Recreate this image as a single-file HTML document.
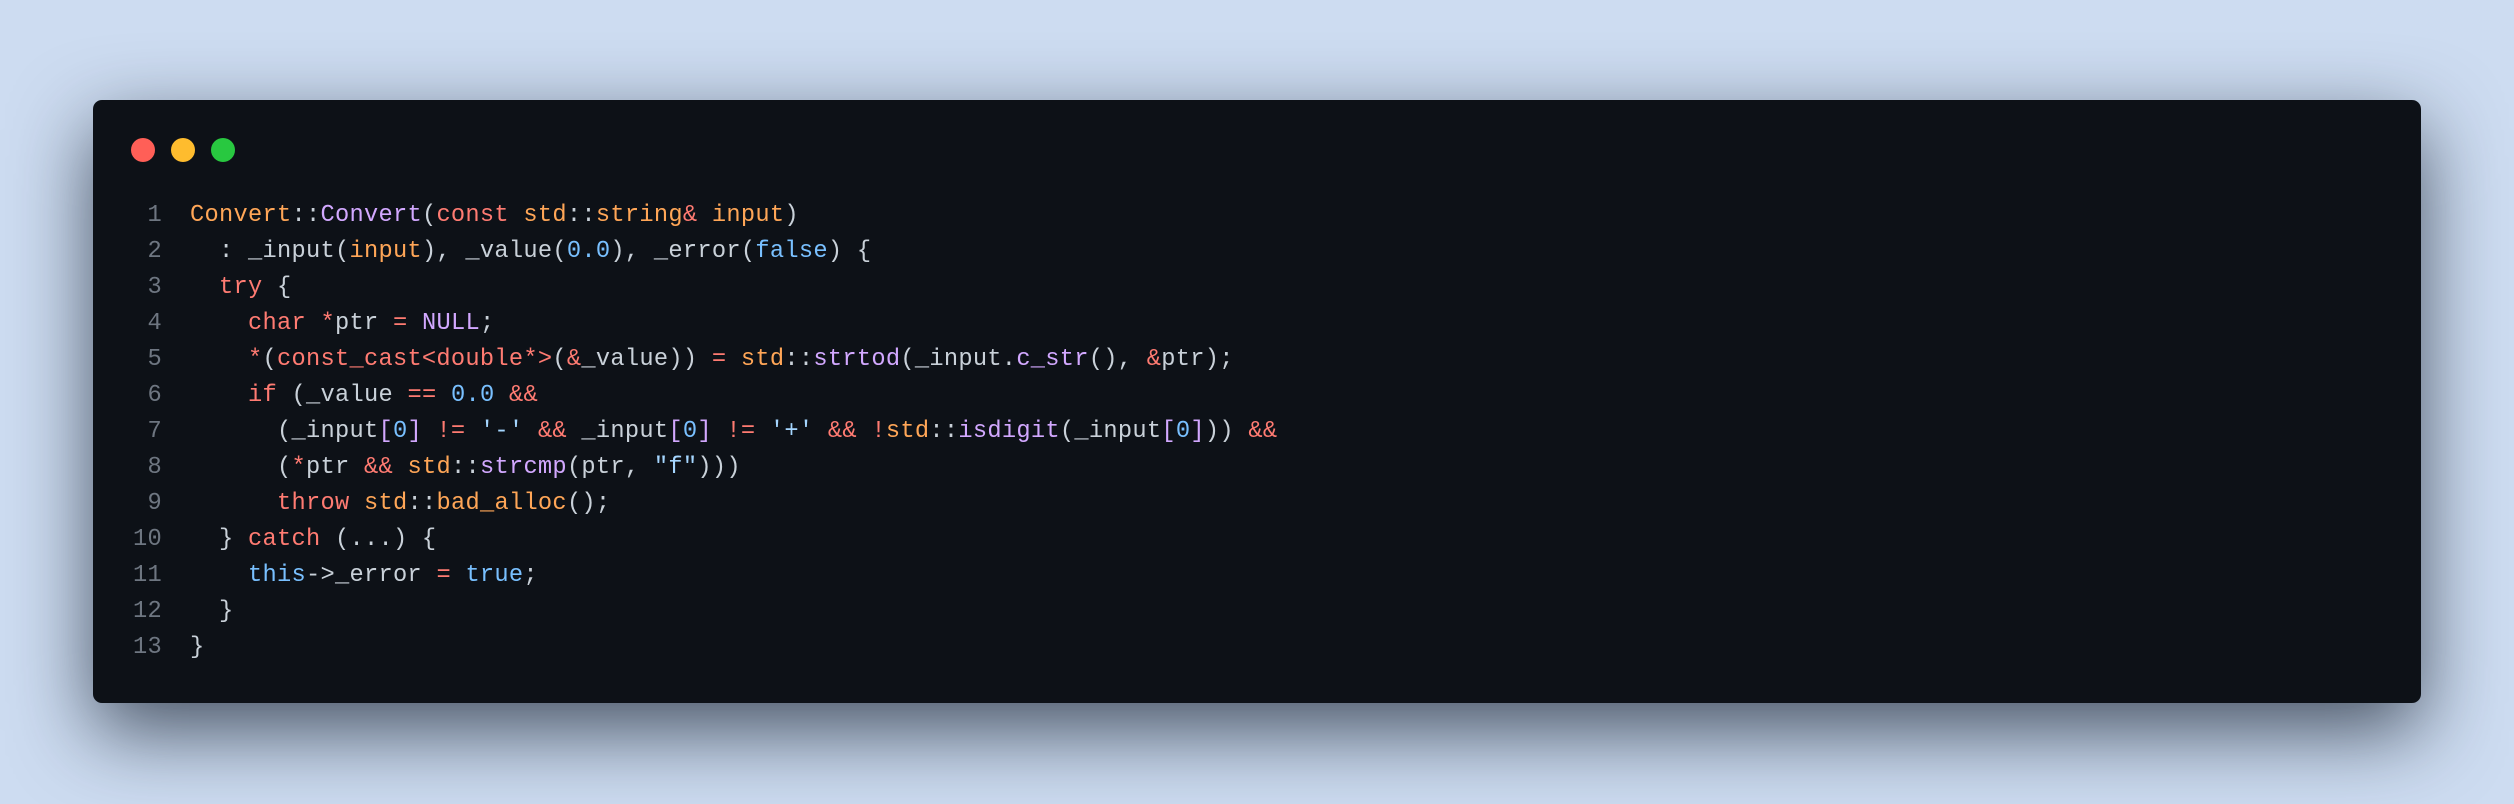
<!DOCTYPE html>
<html><head><meta charset="utf-8"><style>
html,body{margin:0;padding:0;}
body{width:2514px;height:804px;background:#cddcf1;position:relative;overflow:hidden;font-family:"Liberation Mono",monospace;}
.win{position:absolute;left:93px;top:100px;width:2328px;height:603px;background:#0d1117;border-radius:9px;box-shadow:0 28px 80px rgba(15,25,40,0.7);}
.dot{position:absolute;top:138px;width:24px;height:24px;border-radius:50%;}
.code{position:absolute;left:0;top:198px;font-size:23.7px;letter-spacing:0.28px;line-height:36px;color:#c9d1d9;white-space:pre;}
.ln{display:inline-block;width:162px;text-align:right;color:#6e7681;margin-right:28px;}
.k{color:#ff7b72}.o{color:#ffa657}.p{color:#d2a8ff}.b{color:#79c0ff}.s{color:#a5d6ff}
</style></head><body>
<div class="win"></div>
<div class="dot" style="left:131px;background:#ff5f57"></div>
<div class="dot" style="left:171px;background:#febc2e"></div>
<div class="dot" style="left:211px;background:#28c840"></div>
<div class="code"><span class="ln">1</span><span class="o">Convert</span>::<span class="p">Convert</span>(<span class="k">const</span> <span class="o">std</span>::<span class="o">string</span><span class="k">&amp;</span> <span class="o">input</span>)
<span class="ln">2</span>  : _input(<span class="o">input</span>), _value(<span class="b">0.0</span>), _error(<span class="b">false</span>) {
<span class="ln">3</span>  <span class="k">try</span> {
<span class="ln">4</span>    <span class="k">char</span> <span class="k">*</span>ptr <span class="k">=</span> <span class="p">NULL</span>;
<span class="ln">5</span>    <span class="k">*</span>(<span class="k">const_cast&lt;double*&gt;</span>(<span class="k">&amp;</span>_value)) <span class="k">=</span> <span class="o">std</span>::<span class="p">strtod</span>(_input.<span class="p">c_str</span>(), <span class="k">&amp;</span>ptr);
<span class="ln">6</span>    <span class="k">if</span> (_value <span class="k">==</span> <span class="b">0.0</span> <span class="k">&amp;&amp;</span>
<span class="ln">7</span>      (_input<span class="p">[</span><span class="b">0</span><span class="p">]</span> <span class="k">!=</span> <span class="s">'-'</span> <span class="k">&amp;&amp;</span> _input<span class="p">[</span><span class="b">0</span><span class="p">]</span> <span class="k">!=</span> <span class="s">'+'</span> <span class="k">&amp;&amp;</span> <span class="k">!</span><span class="o">std</span>::<span class="p">isdigit</span>(_input<span class="p">[</span><span class="b">0</span><span class="p">]</span>)) <span class="k">&amp;&amp;</span>
<span class="ln">8</span>      (<span class="k">*</span>ptr <span class="k">&amp;&amp;</span> <span class="o">std</span>::<span class="p">strcmp</span>(ptr, <span class="s">"f"</span>)))
<span class="ln">9</span>      <span class="k">throw</span> <span class="o">std</span>::<span class="o">bad_alloc</span>();
<span class="ln">10</span>  } <span class="k">catch</span> (...) {
<span class="ln">11</span>    <span class="b">this</span>-&gt;_error <span class="k">=</span> <span class="b">true</span>;
<span class="ln">12</span>  }
<span class="ln">13</span>}</div>
</body></html>
